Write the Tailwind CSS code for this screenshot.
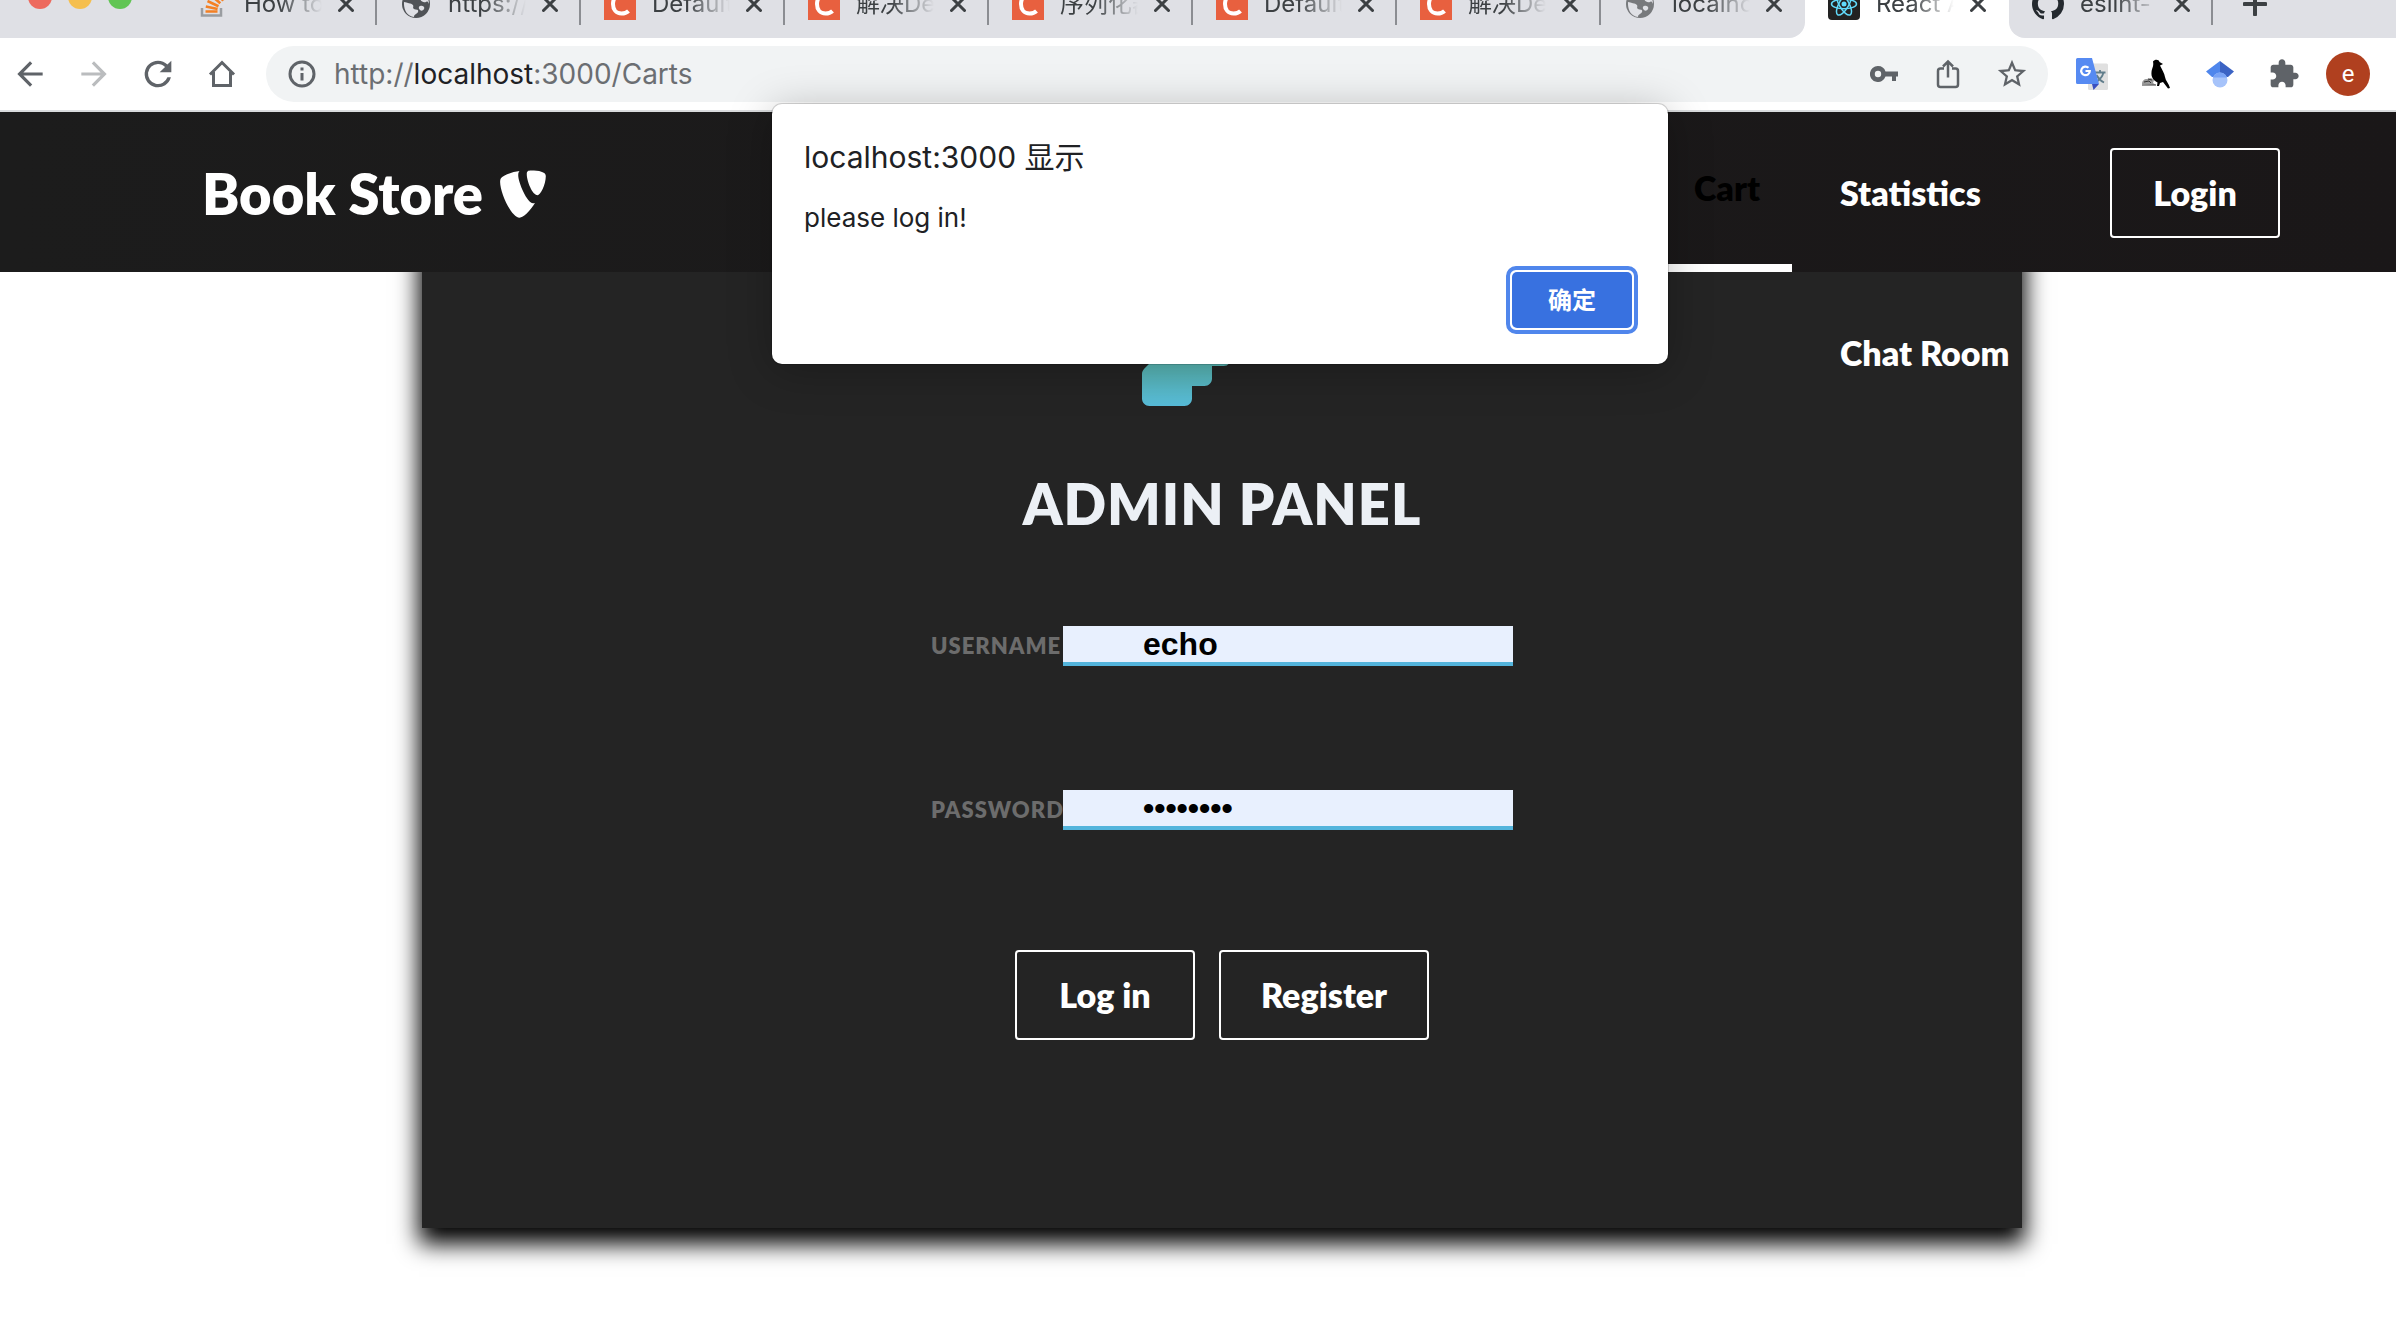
<!DOCTYPE html>
<html lang="zh-CN">
<head>
<meta charset="utf-8">
<title>React App</title>
<script src="https://cdn.jsdelivr.net/npm/@tailwindcss/browser@4"></script>
</head>
<body class="relative min-h-screen overflow-x-hidden bg-white font-['Inter','Noto_Sans_CJK_SC',sans-serif]">

<!-- Shared favicon shapes -->
<svg class="hidden" aria-hidden="true">
  <symbol id="fav-c" viewBox="0 0 32 32"><rect width="32" height="32" fill="#e8603f"/><path d="M25 8.500C23.500 6.500 21 5.500 18.500 5.500C12.500 5.500 9 10.500 9 16C9 21.500 12 25.500 17.500 25.500C20.500 25.500 23 24.500 24.500 23" fill="none" stroke="#fff" stroke-width="4"/></symbol>
  <symbol id="fav-globe" viewBox="0 0 32 32"><circle cx="16" cy="16" r="14" fill="currentColor"/><path d="M4 14c3 1 7 1 9 3 1 2-1 3 1 4s5 0 4 3c-1 2-4 2-4 5C7 28 3.500 22 4 14zM19 3c-2 2-5 2-4 5 1 2 4 1 5 3s3 4 6 3c2-1 2 0 3 2 0-6-4-11.500-10-13zM20 18c3-1 5 1 4 3s-3 2-4 1-2-3 0-4z" fill="#dfe0e5"/></symbol>
  <symbol id="tab-x" viewBox="0 0 16 16"><path d="M1.500 1.500l13 13M14.500 1.500l-13 13" stroke="#3c4043" stroke-width="3" stroke-linecap="round"/></symbol>
</svg>

<header>
  <!-- Tab strip -->
  <div class="flex h-[38px] items-end overflow-hidden text-[24px] leading-8 text-[#3c4043]">
    <div class="flex h-[68px] shrink-0 items-center rounded-br-[16px] bg-[#dfe0e5]">
      <div class="flex w-[173px] gap-4 pb-3.5 pl-7">
        <span class="size-6 rounded-full bg-[#ed6a5e]"></span>
        <span class="size-6 rounded-full bg-[#f5bf4f]"></span>
        <span class="size-6 rounded-full bg-[#61c554]"></span>
      </div>
      <div class="flex h-[42px] w-[204px] items-center border-r-2 border-[#8b8d92] pl-[23px]">
        <svg class="size-8" viewBox="0 0 32 32" fill="none"><path d="M6 20v7.500h19V20" stroke="#9a9da1" stroke-width="2.500"/><path d="M9.500 23.500h12M9.800 18.500l11.800 2.500M11.500 13l11 5.200M15 7.500l9.300 7.700M20 3l7.200 9.800" stroke="#f48024" stroke-width="2.600"/></svg>
        <span class="ml-4 w-[78px] overflow-hidden whitespace-nowrap mask-r-from-45% mask-r-to-100%">How to</span>
        <button class="ml-4" aria-label="Close"><svg class="size-4"><use href="#tab-x"/></svg></button>
      </div>
      <div class="flex h-[42px] w-[204px] items-center border-r-2 border-[#8b8d92] pl-[23px]">
        <svg class="size-8 text-[#505357]"><use href="#fav-globe"/></svg>
        <span class="ml-4 w-[78px] overflow-hidden whitespace-nowrap mask-r-from-45% mask-r-to-100%">https://</span>
        <button class="ml-4" aria-label="Close"><svg class="size-4"><use href="#tab-x"/></svg></button>
      </div>
      <div class="flex h-[42px] w-[204px] items-center border-r-2 border-[#8b8d92] pl-[23px]">
        <svg class="size-8"><use href="#fav-c"/></svg>
        <span class="ml-4 w-[78px] overflow-hidden whitespace-nowrap mask-r-from-45% mask-r-to-100%">Default</span>
        <button class="ml-4" aria-label="Close"><svg class="size-4"><use href="#tab-x"/></svg></button>
      </div>
      <div class="flex h-[42px] w-[204px] items-center border-r-2 border-[#8b8d92] pl-[23px]">
        <svg class="size-8"><use href="#fav-c"/></svg>
        <span class="ml-4 w-[78px] overflow-hidden whitespace-nowrap mask-r-from-45% mask-r-to-100%">解决De</span>
        <button class="ml-4" aria-label="Close"><svg class="size-4"><use href="#tab-x"/></svg></button>
      </div>
      <div class="flex h-[42px] w-[204px] items-center border-r-2 border-[#8b8d92] pl-[23px]">
        <svg class="size-8"><use href="#fav-c"/></svg>
        <span class="ml-4 w-[78px] overflow-hidden whitespace-nowrap mask-r-from-45% mask-r-to-100%">序列化器</span>
        <button class="ml-4" aria-label="Close"><svg class="size-4"><use href="#tab-x"/></svg></button>
      </div>
      <div class="flex h-[42px] w-[204px] items-center border-r-2 border-[#8b8d92] pl-[23px]">
        <svg class="size-8"><use href="#fav-c"/></svg>
        <span class="ml-4 w-[78px] overflow-hidden whitespace-nowrap mask-r-from-45% mask-r-to-100%">Default</span>
        <button class="ml-4" aria-label="Close"><svg class="size-4"><use href="#tab-x"/></svg></button>
      </div>
      <div class="flex h-[42px] w-[204px] items-center border-r-2 border-[#8b8d92] pl-[23px]">
        <svg class="size-8"><use href="#fav-c"/></svg>
        <span class="ml-4 w-[78px] overflow-hidden whitespace-nowrap mask-r-from-45% mask-r-to-100%">解决De</span>
        <button class="ml-4" aria-label="Close"><svg class="size-4"><use href="#tab-x"/></svg></button>
      </div>
      <div class="flex h-[42px] w-[204px] items-center pl-[23px]">
        <svg class="size-8 text-[#77797c]"><use href="#fav-globe"/></svg>
        <span class="ml-4 w-[78px] overflow-hidden whitespace-nowrap mask-r-from-45% mask-r-to-100%">localhost</span>
        <button class="ml-4" aria-label="Close"><svg class="size-4"><use href="#tab-x"/></svg></button>
      </div>
    </div>
    <div class="flex h-[68px] w-[204px] shrink-0 items-center bg-white pl-[23px]">
      <svg class="size-8" viewBox="0 0 32 32" fill="none"><rect width="32" height="32" rx="4" fill="#222"/><g stroke="#61dafb" stroke-width="1.500"><ellipse cx="16" cy="16" rx="12.500" ry="4.800"/><ellipse cx="16" cy="16" rx="12.500" ry="4.800" transform="rotate(60 16 16)"/><ellipse cx="16" cy="16" rx="12.500" ry="4.800" transform="rotate(120 16 16)"/></g><circle cx="16" cy="16" r="2.500" fill="#61dafb"/></svg>
      <span class="ml-4 w-[78px] overflow-hidden whitespace-nowrap mask-r-from-45% mask-r-to-100%">React App</span>
      <button class="ml-4" aria-label="Close"><svg class="size-4"><use href="#tab-x"/></svg></button>
    </div>
    <div class="flex h-[68px] flex-1 items-center rounded-bl-[16px] bg-[#dfe0e5]">
      <div class="flex h-[42px] w-[204px] items-center border-r-2 border-[#8b8d92] pl-[23px]">
        <svg class="size-8" viewBox="0 0 16 16" fill="#24292e"><path d="M8 0C3.580 0 0 3.580 0 8c0 3.540 2.290 6.530 5.470 7.590.4.070.55-.17.55-.38 0-.19-.01-.82-.01-1.490-2.010.37-2.530-.49-2.690-.94-.09-.23-.48-.94-.82-1.130-.28-.15-.68-.52-.01-.53.63-.01 1.080.58 1.230.82.72 1.210 1.870.87 2.330.66.07-.52.28-.87.51-1.070-1.780-.2-3.640-.89-3.640-3.950 0-.87.31-1.590.82-2.150-.08-.2-.36-1.020.08-2.120 0 0 .67-.21 2.200.82.64-.18 1.320-.27 2-.27s1.360.09 2 .27c1.530-1.040 2.200-.82 2.200-.82.44 1.100.16 1.920.08 2.120.51.56.82 1.270.82 2.150 0 3.070-1.870 3.750-3.650 3.950.29.25.54.73.54 1.480 0 1.070-.01 1.930-.01 2.200 0 .21.15.46.55.38A8.010 8.010 0 0 0 16 8c0-4.420-3.580-8-8-8z"/></svg>
        <span class="ml-4 w-[78px] overflow-hidden whitespace-nowrap mask-r-from-45% mask-r-to-100%">eslint-</span>
        <button class="ml-4" aria-label="Close"><svg class="size-4"><use href="#tab-x"/></svg></button>
      </div>
      <button class="ml-[30px]" aria-label="New tab"><svg class="size-6" viewBox="0 0 24 24"><path d="M12 1.500v21M1.500 12h21" stroke="#3c4043" stroke-width="4" stroke-linecap="round"/></svg></button>
    </div>
  </div>

  <!-- Toolbar -->
  <div class="flex h-[74px] items-center gap-6 border-b-2 border-[#d9dbdd] bg-white pr-7 pl-2.5 text-[#5f6368]">
    <button class="flex w-10 justify-center" aria-label="Back"><svg class="size-[38px]" viewBox="0 0 24 24" fill="currentColor"><path d="M20 11H7.830l5.590-5.590L12 4l-8 8 8 8 1.410-1.410L7.830 13H20v-2z"/></svg></button>
    <button class="flex w-10 justify-center text-[#babcbe]" aria-label="Forward"><svg class="size-[38px]" viewBox="0 0 24 24" fill="currentColor"><path d="M4 13h12.170l-5.590 5.590L12 20l8-8-8-8-1.410 1.410L16.170 11H4v2z"/></svg></button>
    <button class="flex w-10 justify-center" aria-label="Reload"><svg class="size-10" viewBox="0 0 24 24" fill="currentColor"><path d="M17.650 6.350A7.958 7.958 0 0 0 12 4a8 8 0 1 0 7.730 10h-2.080A6 6 0 1 1 12 6c1.660 0 3.140.69 4.220 1.780L13 11h7V4l-2.350 2.350z"/></svg></button>
    <button class="flex w-10 justify-center" aria-label="Home"><svg class="size-7" viewBox="0 0 28 28" fill="none" stroke="currentColor" stroke-width="3"><path d="M2 14.500L14 2.500l12 12"/><path d="M5.500 12v13.500h17V12"/></svg></button>
    <div class="flex h-14 flex-1 items-center rounded-full bg-[#f1f3f4] pr-4 pl-5">
      <svg class="size-8" viewBox="0 0 32 32" fill="none"><circle cx="16" cy="16" r="12" stroke="currentColor" stroke-width="3"/><path d="M14.500 15h3v7.500h-3zM14.500 9.500h3v3h-3z" fill="currentColor"/></svg>
      <div role="textbox" aria-label="Address" class="ml-4 flex-1 text-[28px] leading-9 text-[#6b6e72]">http://<span class="text-[#202124]">localhost</span>:3000/Carts</div>
      <div class="flex gap-6">
        <button class="flex w-10 items-center justify-center" aria-label="Passwords"><svg class="h-4 w-7" viewBox="0 0 28 16" fill="currentColor"><path fill-rule="evenodd" d="M8 0a8 8 0 1 0 7.500 10.500H22V15h4v-4.500h2v-5H15.500A8 8 0 0 0 8 0zm0 4.800a3.200 3.200 0 1 1 0 6.400 3.200 3.200 0 0 1 0-6.400z"/></svg></button>
        <button class="flex w-10 items-center justify-center" aria-label="Share"><svg class="h-[30px] w-6" viewBox="0 0 24 30" fill="none" stroke="currentColor" stroke-width="2.500"><path d="M8 9.500H4.500a2.500 2.500 0 0 0-2.500 2.500v13.500A2.500 2.500 0 0 0 4.500 28h15a2.500 2.500 0 0 0 2.500-2.500V12a2.500 2.500 0 0 0-2.500-2.500H16M12 18.500V3M7 7.500l5-5 5 5"/></svg></button>
        <button class="flex w-10 items-center justify-center" aria-label="Bookmark"><svg class="size-[34px]" viewBox="0 0 24 24" fill="currentColor"><path d="M22 9.240l-7.190-.62L12 2 9.190 8.630 2 9.240l5.460 4.730L5.820 21 12 17.270 18.180 21l-1.630-7.030L22 9.240zM12 15.400l-3.760 2.270 1-4.280-3.320-2.880 4.380-.38L12 6.100l1.710 4.040 4.380.38-3.320 2.880 1 4.280L12 15.400z"/></svg></button>
      </div>
    </div>
    <button class="flex w-10 justify-center" aria-label="Translate"><svg class="size-8" viewBox="0 0 32 32" fill="none"><rect x="12" y="5.500" width="20" height="26.500" rx="1.500" fill="#e0e0e0"/><path d="M18.500 14.500h11M24 12v2.500M27.500 14.500c-1 4-4 7.500-7.500 9.500M20.500 17c1.500 3 4.500 6 7.500 7.500" stroke="#607d8b" stroke-width="1.800"/><path d="M16 26h7l-5.500 6z" fill="#3a4fbf"/><path d="M1.500 0H16l7 26H1.500A1.500 1.500 0 0 1 0 24.500v-23A1.500 1.500 0 0 1 1.500 0z" fill="#568af2"/><path d="M12.500 9.800A4.300 4.300 0 1 0 13.800 13H9.500" stroke="#fff" stroke-width="2.200"/></svg></button>
    <button class="flex w-10 justify-center" aria-label="Bird extension"><svg class="size-[30px]" viewBox="0 0 30 30"><path d="M1 25c0-3 2-5 5-5l4-1 3 2-1 3 3 2z" fill="#999"/><path d="M1 26h14M3 23l5-1 2 2M7 20l4 1" stroke="#333" stroke-width="1" fill="none"/><path d="M12 2.500C14 0 18 .5 18.500 3l3.500 2-3 1.500c2 4 4.500 8 5 11.500.5 3.500 4 7 5 11l-2 .5-5-6.500-3 1-1 3h-2l.5-3.500C12 21 10 18 10.500 13 11 9 13 7 12 2.500z" fill="#000"/></svg></button>
    <button class="flex w-10 justify-center" aria-label="Scholar"><svg class="size-7" viewBox="0 0 28 28"><path d="M14 1L0 11.500l6 5.500h8z" fill="#4f86ec"/><path d="M14 1l14 10.500-6 5.500h-8z" fill="#3b63c4"/><circle cx="14" cy="20" r="7.500" fill="#a6c3fa"/><path d="M7 17.500a7.500 7.500 0 0 1 14 0z" fill="#79a3f5"/></svg></button>
    <button class="flex w-10 justify-center" aria-label="Extensions"><svg class="size-8" viewBox="0 0 24 24" fill="currentColor"><path d="M20.500 11H19V7c0-1.100-.9-2-2-2h-4V3.500C13 2.120 11.880 1 10.500 1S8 2.120 8 3.500V5H4c-1.100 0-1.990.9-1.990 2v3.800H3.500c1.490 0 2.700 1.210 2.700 2.700s-1.210 2.700-2.700 2.700H2V20c0 1.100.9 2 2 2h3.800v-1.500c0-1.490 1.210-2.700 2.700-2.700 1.490 0 2.700 1.210 2.700 2.700V22H17c1.100 0 2-.9 2-2v-4h1.500c1.380 0 2.500-1.120 2.500-2.500S21.880 11 20.500 11z"/></svg></button>
    <button class="-mx-0.5 flex size-11 items-center justify-center rounded-full bg-[#b0401f] font-['Roboto',sans-serif] text-[24px] leading-6 text-white">e</button>
  </div>
</header>

<!-- Site navigation -->
<nav class="relative z-10 flex h-40 items-center bg-linear-to-r from-[#1c1c1c] to-[#1a1718] pr-[116px] pl-[202px] font-['Lato',sans-serif] font-extrabold text-white">
  <a href="#" class="flex items-center gap-4 pt-1 text-[56px] leading-[68px]">Book Store
    <svg class="h-[54px] w-12" viewBox="0 0 448 512" fill="currentColor"><path d="M178.700 78.400c0-24.700 5.400-32.400 13.900-39.400-69.500 8.500-149.300 34-176.300 66.400-5.400 7.700-9.300 20.800-9.300 37.100C7 246 113.800 480 191.100 480c36.300 0 97.300-59.500 146.700-139-7 2.300-11.600 2.300-18.500 2.300-57.200 0-140.600-198.500-140.600-264.900zM301.500 32c-30.100 0-41.700 5.400-41.700 36.300 0 66.400 53.800 198.500 101.700 198.500 26.300 0 78.800-99.700 78.800-182.300 0-40.900-67-52.500-138.800-52.500z"/></svg>
  </a>
  <div class="ml-auto flex h-40 text-[34px] leading-10">
    <a href="#" class="flex h-40 items-center border-b-8 border-white px-8 text-black">Cart</a>
    <div class="w-[318px] pl-12">
      <a href="#" class="flex h-40 items-center pt-0.5">Statistics</a>
      <a href="#" class="flex h-40 items-center pt-0.5">Chat Room</a>
    </div>
  </div>
  <button class="mt-0.5 h-[90px] w-[170px] rounded-[4px] border-2 border-white text-[34px] leading-10">Login</button>
</nav>

<!-- Login panel: its top edge sits under the navigation bar -->
<main class="-mt-8 pr-[374px] pl-[422px] font-['Lato',sans-serif] font-extrabold">
  <section class="flex flex-col items-center bg-[#242424] pt-1.5 pb-[188px] shadow-[0_13px_22px_3px_#000]">
    <svg class="size-40" viewBox="0 0 512 512"><defs><linearGradient id="key-fill" x1="0" y1="0" x2="0" y2="1"><stop offset="0" stop-color="#27ef9f"/><stop offset=".75" stop-color="#58b6b4"/><stop offset="1" stop-color="#58bcd9"/></linearGradient></defs><path fill="url(#key-fill)" d="M512 176.001C512 273.203 433.202 352 336 352c-11.220 0-22.190-1.062-32.827-3.069l-24.012 27.014A23.999 23.999 0 0 1 261.223 384H224v40c0 13.255-10.745 24-24 24h-40v40c0 13.255-10.745 24-24 24H24c-13.255 0-24-10.745-24-24v-78.059c0-6.365 2.529-12.470 7.029-16.971l161.802-161.802C163.108 213.814 160 195.271 160 176 160 78.798 238.797.001 335.999 0 433.488-.001 512 78.511 512 176.001zM336 128c0 26.510 21.490 48 48 48s48-21.490 48-48-21.490-48-48-48-48 21.490-48 48z"/></svg>
    <h1 class="mt-[62px] text-[56px] leading-[72px] tracking-[1px] text-[#ecf0f5]">ADMIN PANEL</h1>
    <form class="mt-[86px] flex flex-col items-center">
      <div class="flex items-center">
        <label for="username" class="w-[132px] text-[22px] leading-8 tracking-[1px] text-[#6c6c6c]">USERNAME</label>
        <input id="username" type="text" value="echo" class="h-10 w-[450px] border-b-4 border-[#53b4dc] bg-[#e8f0fe] pl-20 font-['Liberation_Sans',sans-serif] text-[32px] leading-9 font-bold text-black outline-none">
      </div>
      <div class="mt-[124px] flex items-center">
        <label for="password" class="w-[132px] text-[22px] leading-8 tracking-[1px] text-[#6c6c6c]">PASSWORD</label>
        <input id="password" type="password" value="password" class="h-10 w-[450px] border-b-4 border-[#53b4dc] bg-[#e8f0fe] pl-20 font-['Liberation_Sans',sans-serif] text-[32px] leading-9 font-bold text-black outline-none">
      </div>
      <div class="mt-[120px] flex justify-center gap-6 text-[34px] leading-10 text-white">
        <button type="button" class="h-[90px] w-[180px] rounded-[4px] border-2 border-white">Log in</button>
        <button type="button" class="h-[90px] w-[210px] rounded-[4px] border-2 border-white">Register</button>
      </div>
    </form>
  </section>
</main>

<!-- Alert dialog -->
<div role="alertdialog" aria-labelledby="alert-title" class="absolute top-[104px] left-[772px] z-20 flex h-[260px] w-[896px] flex-col rounded-[10px] bg-white px-8 pt-8 text-[#202124] shadow-[0_0_0_1px_rgba(0,0,0,0.15),0_6px_44px_rgba(0,0,0,0.25)]">
  <h2 id="alert-title" class="text-[30px] leading-[42px]">localhost:3000 显示</h2>
  <p class="mt-5 text-[26px] leading-10">please log in!</p>
  <button class="absolute right-[30px] bottom-[30px] h-[68px] w-[132px] rounded-[10px] border-4 border-[#5086ec] bg-white p-0.5"><span class="flex h-full items-center justify-center rounded-[5px] bg-[#3871e0] pb-0.5 font-['Noto_Sans_CJK_SC',sans-serif] text-[24px] leading-8 font-bold text-white">确定</span></button>
</div>

</body>
</html>
